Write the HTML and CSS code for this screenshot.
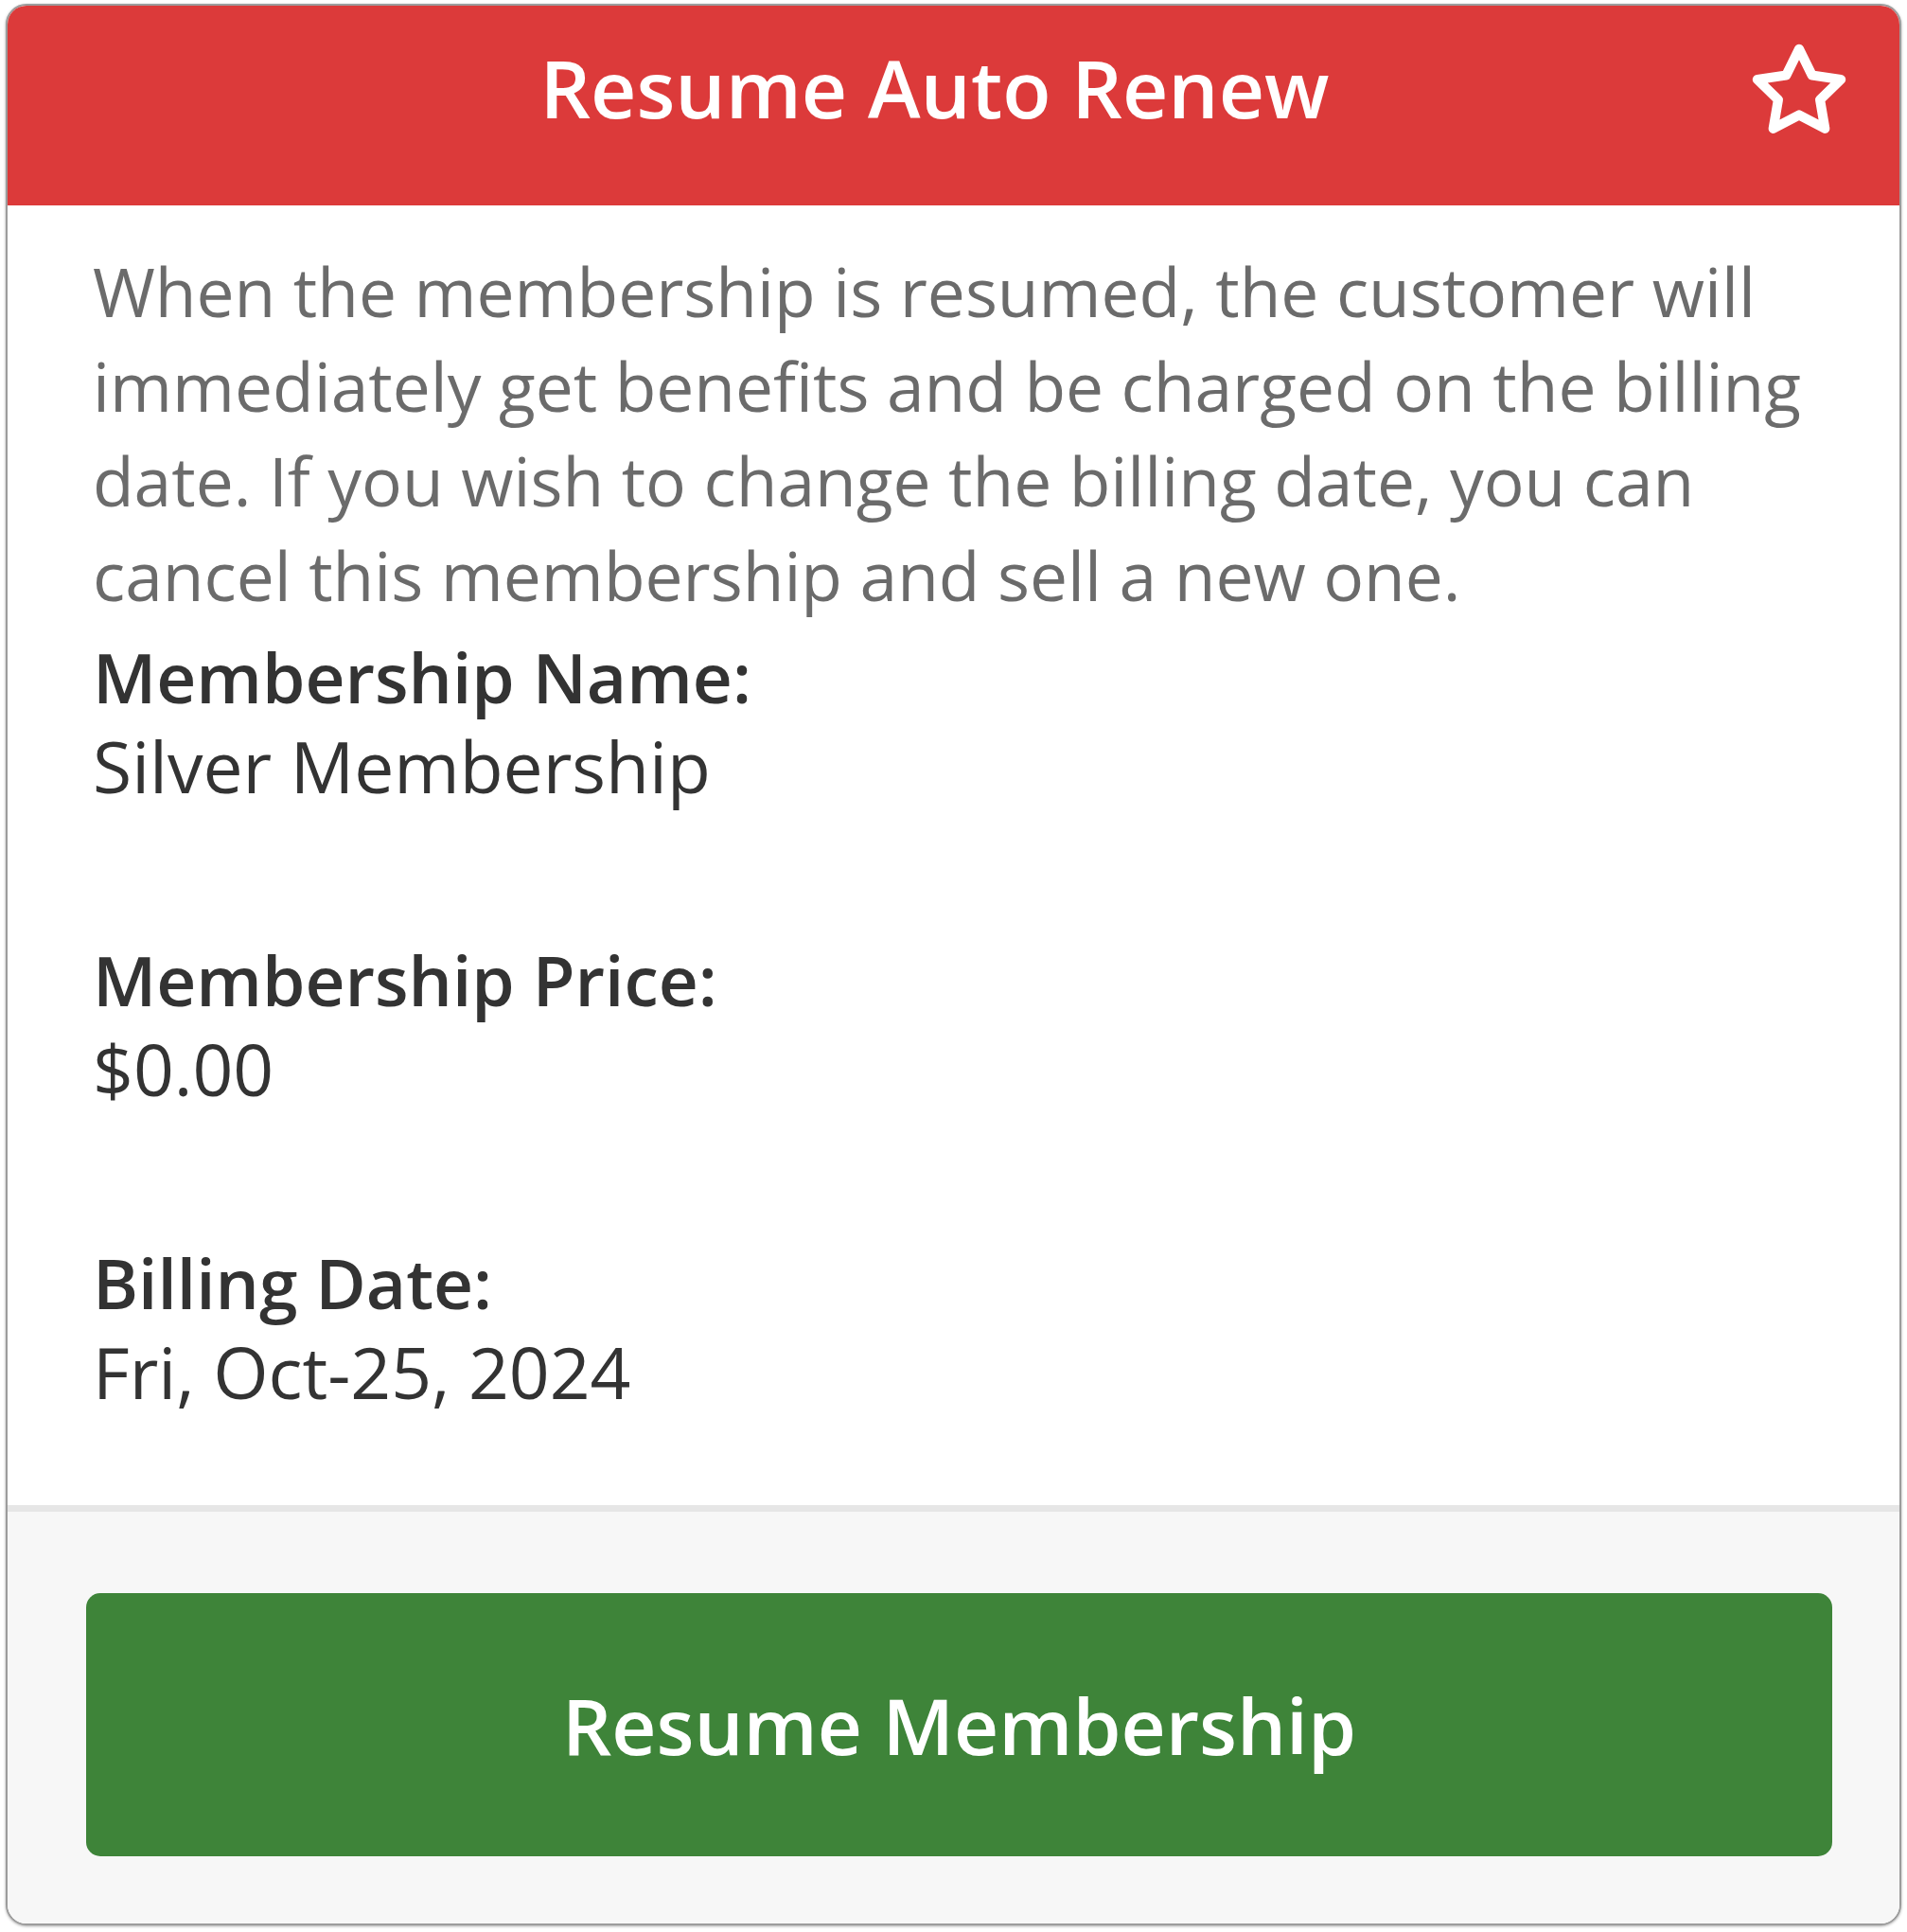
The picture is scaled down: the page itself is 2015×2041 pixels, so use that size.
FILE: index.html
```html
<!DOCTYPE html>
<html lang="en">
<head>
<meta charset="utf-8">
<title>Resume Auto Renew</title>
<link rel="stylesheet" href="styles.css">
</head>
<body>
<div class="card">
  <header class="card-header">
    <h1 class="card-title">Resume Auto Renew</h1>
    <button class="fav-btn" aria-label="Favorite">
      <svg viewBox="0 0 24 24" width="106" height="106" fill="none" stroke="#ffffff" stroke-width="2.3" stroke-linejoin="round" stroke-linecap="round"><path d="M12 2l3.09 6.26L22 9.27l-5 4.87 1.18 6.88L12 17.77l-6.18 3.25L7 14.14 2 9.27l6.91-1.01L12 2z"/></svg>
    </button>
  </header>
  <section class="card-body">
    <p class="description">When the membership is resumed, the customer will immediately get benefits and be charged on the billing date. If you wish to change the billing date, you can cancel this membership and sell a new one.</p>
    <div class="field">
      <div class="field-label">Membership Name:</div>
      <div class="field-value">Silver Membership</div>
    </div>
    <div class="field">
      <div class="field-label">Membership Price:</div>
      <div class="field-value">$0.00</div>
    </div>
    <div class="field">
      <div class="field-label">Billing Date:</div>
      <div class="field-value">Fri, Oct-25, 2024</div>
    </div>
  </section>
  <footer class="card-footer">
    <button class="primary-btn">Resume Membership</button>
  </footer>
</div>
</body>
</html>
```

FILE: styles.css
```css
* { box-sizing: border-box; }
html, body { margin: 0; padding: 0; background: #ffffff; }
body { padding: 4px 6px 7px 6px; font-family: "Open Sans", "Noto Sans", "Liberation Sans", sans-serif; }

.card {
  height: 2030px;
  border: 2px solid #9c9c9c;
  border-radius: 22px;
  overflow: hidden;
  display: flex;
  flex-direction: column;
  box-shadow: 0 1px 3px rgba(0,0,0,0.35);
  background: #ffffff;
}

.card-header {
  position: relative;
  height: 211px;
  flex: none;
  background: #dc3a3a;
  display: flex;
  justify-content: center;
  padding: 27px 40px 0 0;
}
.card-title {
  margin: 0;
  color: #ffffff;
  font-weight: 600;
  font-size: 84px;
  line-height: 120px;
}
.fav-btn {
  position: absolute;
  top: 37px;
  right: 53px;
  padding: 0;
  border: 0;
  background: none;
  line-height: 0;
}

.card-body {
  flex: 1;
  padding: 41px 60px 0 90px;
}
.description {
  margin: 0 0 9px 0;
  color: #6b6b6b;
  font-size: 71.3px;
  line-height: 100px;
}
.field { margin-bottom: 130px; }
.field:last-child { margin-bottom: 0; }
.field-label {
  color: #333333;
  font-weight: 600;
  font-size: 73px;
  line-height: 95px;
}
.field-value {
  color: #333333;
  font-size: 75px;
  line-height: 95px;
}

.card-footer {
  flex: none;
  height: 442px;
  border-top: 7px solid #e6e6e6;
  background: #f7f7f7;
  padding: 86px 71px 71px 83px;
  display: flex;
}
.primary-btn {
  flex: 1;
  border: 0;
  border-radius: 15px;
  background: #3e8439;
  color: #ffffff;
  font-family: inherit;
  font-weight: 600;
  font-size: 82px;
}
```
